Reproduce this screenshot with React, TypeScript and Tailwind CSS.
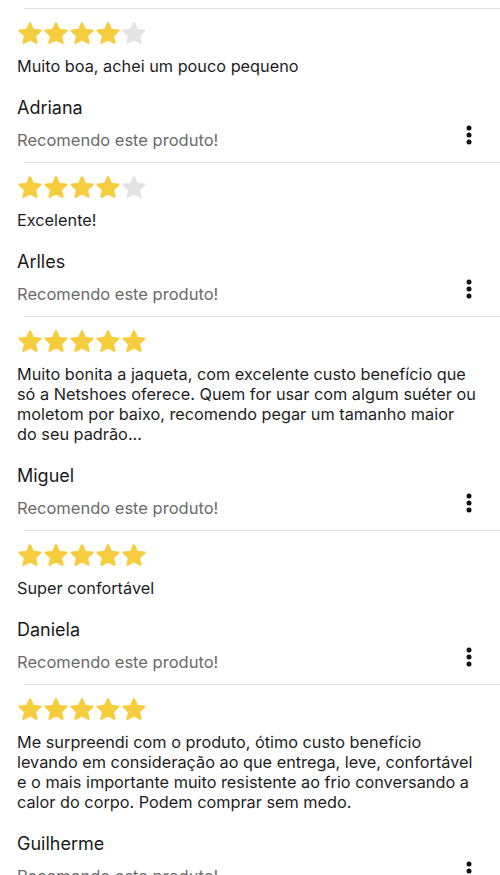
import React from "react";

type Review = { stars: number; lines: string[]; name: string };

const reviews: Review[] = [
  { stars: 4, lines: ["Muito boa, achei um pouco pequeno"], name: "Adriana" },
  { stars: 4, lines: ["Excelente!"], name: "Arlles" },
  {
    stars: 5,
    lines: [
      "Muito bonita a jaqueta, com excelente custo benefício que",
      "só a Netshoes oferece. Quem for usar com algum suéter ou",
      "moletom por baixo, recomendo pegar um tamanho maior",
      "do seu padrão...",
    ],
    name: "Miguel",
  },
  { stars: 5, lines: ["Super confortável"], name: "Daniela" },
  {
    stars: 5,
    lines: [
      "Me surpreendi com o produto, ótimo custo benefício",
      "levando em consideração ao que entrega, leve, confortável",
      "e o mais importante muito resistente ao frio conversando a",
      "calor do corpo. Podem comprar sem medo.",
    ],
    name: "Guilherme",
  },
];

function Star({ on }: { on: boolean }) {
  const c = on ? "#f6cd3e" : "#e4e4e4";
  return (
    <svg width="26" height="25" viewBox="0 0 26 25" className="block">
      <path
        d="M13 2.2 L16.1 8.9 L23.4 9.7 L18 14.7 L19.5 21.9 L13 18.2 L6.5 21.9 L8 14.7 L2.6 9.7 L9.9 8.9 Z"
        fill={c}
        stroke={c}
        strokeWidth="2.2"
        strokeLinejoin="round"
      />
    </svg>
  );
}

function Dots() {
  return (
    <svg width="6" height="22" viewBox="0 0 6 22" className="block" overflow="visible">
      <circle cx="3" cy="-1" r="2.5" fill="#111" />
      <circle cx="3" cy="6" r="2.5" fill="#111" />
      <circle cx="3" cy="13" r="2.5" fill="#111" />
    </svg>
  );
}

export default function App() {
  return (
    <div
      className="w-[500px] h-[875px] overflow-hidden bg-white pt-[8px]"
      style={{ fontFamily: "Inter, 'Noto Sans', sans-serif" }}
    >
      {reviews.map((r, i) => (
        <div key={i} className="flex flex-col">
          <div className="ml-[24px] h-px bg-[#e2e2e2]" />
          <div className="pl-[17px] pr-[10px] pt-[12px] pb-[11px] flex flex-col">
            <div className="flex">
              {[0, 1, 2, 3, 4].map((s) => (
                <Star key={s} on={s < r.stars} />
              ))}
            </div>
            <p className="mt-[10px] flex flex-col text-[16.3px] leading-[20px] text-[#1e1e1e]">
              {r.lines.map((l, j) => (
                <span key={j} className="whitespace-nowrap">
                  {l}
                </span>
              ))}
            </p>
            <p className="mt-[20px] text-[18px] leading-[24px] text-[#1a1a1a]">{r.name}</p>
            <div className="mt-[9px] mr-[18px] flex items-center justify-between">
              <span className="text-[16.5px] leading-[22px] text-[#6b6b6b]">
                Recomendo este produto!
              </span>
              <Dots />
            </div>
          </div>
        </div>
      ))}
    </div>
  );
}
